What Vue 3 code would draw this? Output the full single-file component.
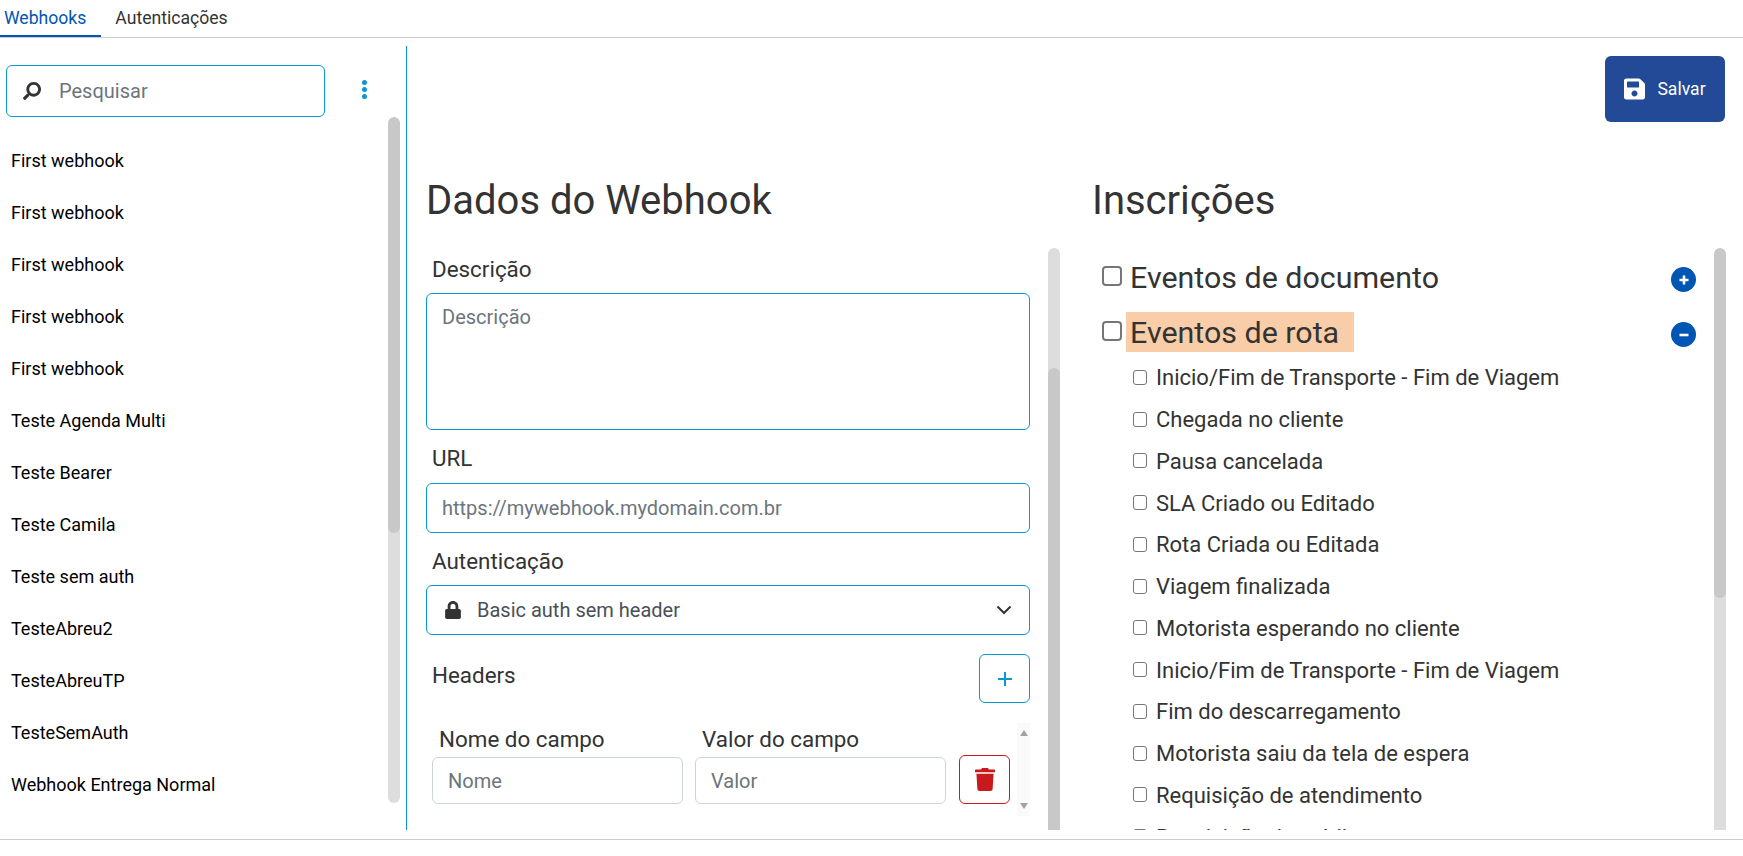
<script setup>
const hooks = ['First webhook','First webhook','First webhook','First webhook','First webhook','Teste Agenda Multi','Teste Bearer','Teste Camila','Teste sem auth','TesteAbreu2','TesteAbreuTP','TesteSemAuth','Webhook Entrega Normal']
const events = ['Inicio/Fim de Transporte - Fim de Viagem','Chegada no cliente','Pausa cancelada','SLA Criado ou Editado','Rota Criada ou Editada','Viagem finalizada','Motorista esperando no cliente','Inicio/Fim de Transporte - Fim de Viagem','Fim do descarregamento','Motorista saiu da tela de espera','Requisição de atendimento','Requisição de crédito']
</script>

<template>
  <div class="page">
    <nav class="tabs">
      <a class="tab active">Webhooks</a>
      <a class="tab">Autenticações</a>
    </nav>
    <main class="main">
      <aside class="side">
        <div class="search-row">
          <label class="search">
            <svg class="search-icon" viewBox="0 0 512 512"><path fill="#333" d="M505 442.700 405.300 343c-4.500-4.500-10.600-7-17-7H372c27.600-35.300 44-79.700 44-128C416 93.100 322.900 0 208 0S0 93.100 0 208s93.100 208 208 208c48.300 0 92.700-16.400 128-44v16.300c0 6.400 2.500 12.500 7 17l99.700 99.700c9.400 9.400 24.600 9.400 33.900 0l28.300-28.300c9.400-9.400 9.400-24.600.1-34zM208 336c-70.700 0-128-57.200-128-128 0-70.700 57.200-128 128-128 70.700 0 128 57.200 128 128 0 70.700-57.200 128-128 128z" transform="matrix(-1 0 0 1 512 0)"/></svg>
            <input class="search-input" placeholder="Pesquisar" />
          </label>
          <span class="kebab"><i></i><i></i><i></i></span>
        </div>
        <div class="side-body">
          <ul class="hook-list">
            <li v-for="(h, i) in hooks" :key="i">{{ h }}</li>
          </ul>
          <div class="track"><div class="thumb thumb-side"></div></div>
        </div>
      </aside>

      <section class="content">
        <div class="actions">
          <button class="save">
            <svg class="save-icon" viewBox="0 0 448 512"><path fill="#fff" d="M433.900 129.900l-83.900-83.900A48 48 0 0 0 316.100 32H48C21.500 32 0 53.500 0 80v352c0 26.500 21.500 48 48 48h352c26.500 0 48-21.500 48-48V163.900a48 48 0 0 0-14.100-34zM224 416c-35.300 0-64-28.700-64-64 0-35.300 28.700-64 64-64s64 28.700 64 64c0 35.300-28.700 64-64 64zm96-304.500V212c0 6.600-5.400 12-12 12H76c-6.600 0-12-5.400-12-12V108c0-6.600 5.400-12 12-12h228.500c3.200 0 6.200 1.300 8.500 3.500l3.500 3.500c2.200 2.200 3.500 5.300 3.500 8.500z"/></svg>
            Salvar
          </button>
        </div>
        <div class="columns">
          <div class="col">
            <h2 class="title">Dados do Webhook</h2>
            <div class="panel">
              <form class="form" @submit.prevent>
                <label class="lbl lbl-first">Descrição</label>
                <textarea class="ctl area" placeholder="Descrição"></textarea>
                <label class="lbl lbl-url">URL</label>
                <input class="ctl line" placeholder="https://mywebhook.mydomain.com.br" />
                <label class="lbl lbl-auth">Autenticação</label>
                <div class="ctl line select">
                  <svg class="lock" viewBox="0 0 448 512"><path fill="#333" d="M400 224h-24v-72C376 68.200 307.800 0 224 0S72 68.200 72 152v72H48c-26.500 0-48 21.500-48 48v192c0 26.500 21.500 48 48 48h352c26.500 0 48-21.500 48-48V272c0-26.500-21.500-48-48-48zm-104 0H152v-72c0-39.700 32.300-72 72-72s72 32.300 72 72v72z"/></svg>
                  <span class="select-text">Basic auth sem header</span>
                  <svg class="chev" viewBox="0 0 16 10"><path d="M1.500 1.500 8 8l6.500-6.500" fill="none" stroke="#333" stroke-width="2"/></svg>
                </div>
                <div class="headers">
                  <span class="lbl headers-lbl">Headers</span>
                  <button type="button" class="add">
                    <svg viewBox="0 0 16 16" width="16" height="16"><path d="M8 1v14M1 8h14" stroke="#0a98cf" stroke-width="2" fill="none"/></svg>
                  </button>
                </div>
                <div class="hbox">
                  <div class="hgrid">
                    <span class="hlbl">Nome do campo</span>
                    <span class="hlbl">Valor do campo</span>
                    <span></span>
                    <input class="hinput" placeholder="Nome" />
                    <input class="hinput" placeholder="Valor" />
                    <button type="button" class="del">
                      <svg viewBox="0 0 448 512" width="20" height="23"><path fill="#c8191d" d="M432 32H312l-9.400-18.700A24 24 0 0 0 281.100 0H166.800a23.700 23.700 0 0 0-21.400 13.300L136 32H16A16 16 0 0 0 0 48v32a16 16 0 0 0 16 16h416a16 16 0 0 0 16-16V48a16 16 0 0 0-16-16zM53.200 467a48 48 0 0 0 47.900 45h245.800a48 48 0 0 0 47.900-45L416 128H32z"/></svg>
                    </button>
                  </div>
                  <div class="mini">
                    <span class="arrow up"></span>
                    <span class="arrow down"></span>
                  </div>
                </div>
              </form>
              <div class="track track-gap"><div class="thumb thumb-form"></div></div>
            </div>
          </div>

          <div class="col">
            <h2 class="title">Inscrições</h2>
            <div class="panel">
              <div class="subs">
                <div class="group">
                  <input type="checkbox" class="cb-lg" />
                  <span class="group-name">Eventos de documento</span>
                  <span class="circle">
                    <svg viewBox="0 0 12 12" width="12" height="12"><path d="M6 1.500v9M1.500 6h9" stroke="#fff" stroke-width="2.600" fill="none"/></svg>
                  </span>
                </div>
                <div class="group group-open">
                  <input type="checkbox" class="cb-lg" />
                  <span class="group-name hl">Eventos de rota</span>
                  <span class="circle">
                    <svg viewBox="0 0 12 12" width="12" height="12"><path d="M1.500 6h9" stroke="#fff" stroke-width="2.600" fill="none"/></svg>
                  </span>
                </div>
                <ul class="events">
                  <li v-for="(e, i) in events" :key="i"><input type="checkbox" class="cb-sm" /><span>{{ e }}</span></li>
                </ul>
              </div>
              <div class="track track-gap"><div class="thumb thumb-subs"></div></div>
            </div>
          </div>
        </div>
      </section>
    </main>
    <div class="foot"></div>
  </div>
</template>

<style>
html, body { margin: 0; background: #fff; overflow: hidden; }
</style>

<style scoped>
.page { width: 1743px; height: 856px; overflow: hidden; font-family: Roboto, "Liberation Sans", sans-serif; color: #333; }
.tabs { display: flex; height: 37px; border-bottom: 1px solid #ccc; box-sizing: content-box; }
.tab { font-size: 17.6px; line-height: 36px; padding: 0 14px; color: #333; height: 35px; }
.tab.active { color: #0056b3; padding: 0 15px 0 4px; border-bottom: 2px solid #0056b3; }
.main { display: flex; height: 792px; }
.side { width: 406px; margin-top: 8px; border-right: 1px solid #0a98cf; box-sizing: content-box; display: flex; flex-direction: column; height: 784px; }
.search-row { display: flex; align-items: center; padding: 19px 0 0 6px; height: 52px; }
.search { width: 319px; height: 52px; box-sizing: border-box; border: 1px solid #0a98cf; border-radius: 6px; display: flex; align-items: center; padding-left: 16px; }
.search-icon { width: 18px; height: 18px; flex: none; }
.search-input { border: 0; outline: 0; padding: 0; margin-left: 18px; font: 20px Roboto, sans-serif; width: 240px; color: #333; }
.search-input::placeholder { color: #6c757d; opacity: 1; }
.kebab { margin-left: 37px; display: flex; flex-direction: column; gap: 2px; margin-top: -3px; }
.kebab i { width: 5px; height: 5px; border-radius: 50%; background: #0a98cf; display: block; }
.side-body { display: flex; height: 686px; }
.hook-list { list-style: none; margin: 0; padding: 18px 0 0 11px; width: 388px; box-sizing: border-box; overflow: hidden; }
.hook-list li { height: 52px; line-height: 52px; font-size: 18px; color: #000; white-space: nowrap; }
.track { width: 12px; flex: none; background: #ddd; border-radius: 6px 6px; overflow: hidden; }
.thumb { background: #c8c8c8; border-radius: 6px; width: 100%; }
.thumb-side { height: 416px; }
.content { flex: 1; min-width: 0; padding: 0 17px 0 19px; display: flex; flex-direction: column; height: 792px; box-sizing: border-box; }
.actions { display: flex; justify-content: flex-end; padding-top: 18px; height: 132px; box-sizing: border-box; padding-right: 1px; }
.save { width: 120px; height: 66px; border: 0; border-radius: 6px; background: #234a96; color: #fff; font: 17.6px Roboto, sans-serif; display: flex; align-items: center; justify-content: center; gap: 12px; padding: 0; }
.save-icon { width: 21px; height: 24px; }
.columns { display: grid; grid-template-columns: 634px 634px; gap: 32px; height: 660px; }
.col { min-width: 0; }
.title { margin: 0 0 17px; padding-top: 1px; font-size: 40px; font-weight: 400; line-height: 60px; color: #333; }
.panel { display: flex; height: 582px; overflow: hidden; }
.track-gap { margin-left: 18px; border-radius: 6px 6px 0 0; }
.thumb-form { margin-top: 120px; height: 480px; }
.thumb-subs { height: 350px; }
.form { flex: 1; min-width: 0; display: flex; flex-direction: column; }
.lbl { font-size: 22.4px; line-height: 30px; padding-left: 6px; display: block; }
.lbl-first { margin-top: 6px; margin-bottom: 9px; }
.lbl-url { margin-top: 13px; margin-bottom: 10px; }
.lbl-auth { margin-top: 13px; margin-bottom: 9px; }
.ctl { box-sizing: border-box; width: 100%; border: 1px solid #0a98cf; border-radius: 6px; font: 20px Roboto, sans-serif; color: #495057; outline: 0; background: #fff; display: block; }
.ctl::placeholder, .hinput::placeholder { color: #6c757d; opacity: 1; }
.area { height: 137px; padding: 11px 15px; resize: none; }
.line { height: 50px; padding: 0 15px; }
.select { display: flex; align-items: center; padding-left: 18px; padding-right: 17px; }
.lock { width: 16px; height: 18px; flex: none; }
.select-text { flex: 1; margin-left: 16px; }
.chev { width: 16px; height: 10px; }
.headers { display: flex; justify-content: space-between; align-items: flex-start; margin-top: 19px; height: 49px; }
.headers-lbl { margin-top: 6px; }
.add { width: 51px; height: 49px; box-sizing: border-box; background: #fff; border: 1px solid #0a98cf; border-radius: 6px; padding: 0; display: flex; align-items: center; justify-content: center; }
.hbox { margin-top: 20px; height: 93px; display: flex; padding-left: 6px; justify-content: space-between; }
.hgrid { display: grid; grid-template-columns: 251px 251px 51px; column-gap: 12px; grid-template-rows: 31px 49px; padding-top: 1px; align-items: start; }
.hgrid > :nth-child(6) { margin-left: 1px; }
.hlbl { font-size: 22.4px; line-height: 30px; padding-left: 7px; color: #333; }
.hinput { box-sizing: border-box; width: 100%; height: 47px; margin-top: 2px; border: 1px solid #ced4da; border-radius: 6px; padding: 0 15px; font: 20px Roboto, sans-serif; outline: 0; }
.del { width: 51px; height: 49px; box-sizing: border-box; background: #fff; border: 1px solid #c8191d; border-radius: 6px; padding: 0; display: flex; align-items: center; justify-content: center; }
.mini { width: 13px; background: #fafafa; display: flex; flex-direction: column; justify-content: space-between; align-items: center; padding: 7px 0; box-sizing: border-box; }
.arrow { width: 0; height: 0; border-left: 4px solid transparent; border-right: 4px solid transparent; }
.up { border-bottom: 6px solid #a3a3a3; }
.down { border-top: 6px solid #a3a3a3; }
.subs { flex: 1; min-width: 0; padding: 10px 0 0 10px; box-sizing: border-box; overflow: hidden; }
.group { display: flex; align-items: center; height: 40px; margin-bottom: 14px; padding-right: 0; }
.group-open { margin-bottom: 5px; }
.cb-lg, .cb-sm { appearance: none; margin: 0; flex: none; background: #fff; border: 2px solid #767676; box-sizing: border-box; }
.cb-lg { width: 20px; height: 20px; border-radius: 4px; margin-bottom: 5px; }
.group-open .cb-lg { margin-bottom: 2px; }
.cb-sm { width: 14px; height: 15px; border-radius: 3px; border-width: 1.500px; margin-bottom: 1px; }
.group-name { font-size: 30.4px; line-height: 40px; height: 40px; margin-left: 4px; padding-left: 4px; padding-right: 15px; flex: none; }
.hl { background: #f9cda8; line-height: 42px; }
.circle { margin-left: auto; width: 25px; height: 25px; border-radius: 50%; background: #0056b3; display: flex; align-items: center; justify-content: center; margin-top: 3px; }
.group-open .circle { margin-top: 5px; }
.events { list-style: none; margin: 0; padding: 0 0 0 31px; }
.events li { display: flex; align-items: center; height: 41.75px; font-size: 22px; white-space: nowrap; }
.events li span { margin-left: 9px; }
.foot { height: 1px; margin-top: 9px; background: #ccc; }
</style>
